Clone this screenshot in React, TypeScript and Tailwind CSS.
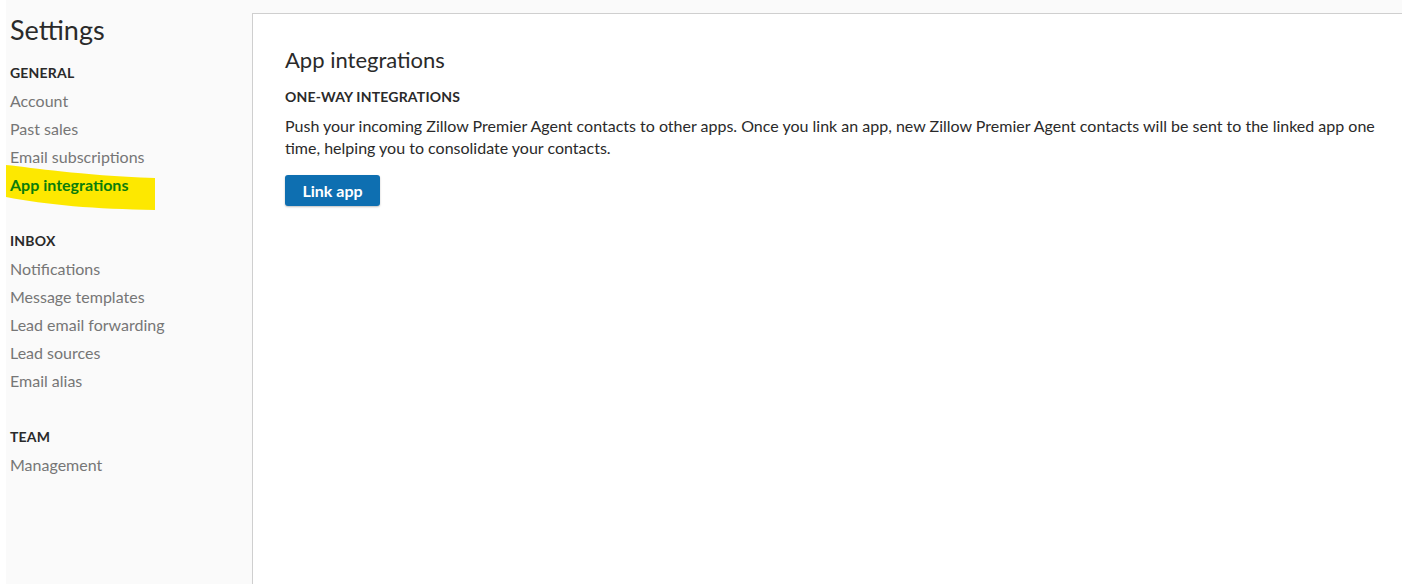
import React from "react";

const font = { fontFamily: "Lato, 'Open Sans', Arial, sans-serif" };

function Section({ title, items, active }: { title: string; items: string[]; active?: string }) {
  return (
    <div className="mb-[28px]">
      <div className="h-[28px] leading-[28px] text-[14px] font-bold text-[#2a2a2a] tracking-[0.2px]">{title}</div>
      {items.map((it) => (
        <div
          key={it}
          className={
            "relative h-[28px] leading-[28px] text-[16px] " +
            (it === active ? "font-bold text-[#0b7d0b]" : "text-[#767676]")
          }
        >
          {it}
        </div>
      ))}
    </div>
  );
}

export default function App() {
  return (
    <div className="relative flex min-h-[584px] bg-[#fafafa]" style={font}>
      <div className="w-[6px] shrink-0 bg-white" />
      <aside className="relative w-[246px] shrink-0 pl-[4px] pt-[14px]">
        <svg className="absolute left-0 top-[165px]" width="150" height="46" viewBox="0 0 150 46">
          <path d="M0 0 C 30 3, 70 10, 149 13 L 149 45 C 90 44, 40 40, 0 32 Z" fill="#fde800" />
        </svg>
        <h1 className="relative mb-[13px] text-[27px] leading-[32px] text-[#2a2a2a]">Settings</h1>
        <div className="relative">
          <Section
            title="GENERAL"
            items={["Account", "Past sales", "Email subscriptions", "App integrations"]}
            active="App integrations"
          />
          <Section
            title="INBOX"
            items={["Notifications", "Message templates", "Lead email forwarding", "Lead sources", "Email alias"]}
          />
          <Section title="TEAM" items={["Management"]} />
        </div>
      </aside>
      <main className="mt-[13px] flex-1 border-l border-t border-[#cfcfcf] bg-white pl-[32px] pt-[32px]">
        <h2 className="text-[22px] leading-[28px] text-[#2a2a2a]">App integrations</h2>
        <div className="mt-[13px] text-[14px] font-bold leading-[20px] tracking-[0.2px] text-[#2a2a2a]">
          ONE-WAY INTEGRATIONS
        </div>
        <p className="mt-[8px] whitespace-nowrap text-[16px] leading-[22px] text-[#2a2a2a]">
          Push your incoming Zillow Premier Agent contacts to other apps. Once you link an app, new Zillow Premier Agent contacts will be sent to the linked app one
          <br />
          time, helping you to consolidate your contacts.
        </p>
        <button className="mt-[16px] h-[31px] w-[95px] rounded-[3px] bg-[#0e6fb1] text-[16px] font-bold text-white shadow-[0_1px_2px_rgba(0,0,0,0.25)]">
          Link app
        </button>
      </main>
    </div>
  );
}
